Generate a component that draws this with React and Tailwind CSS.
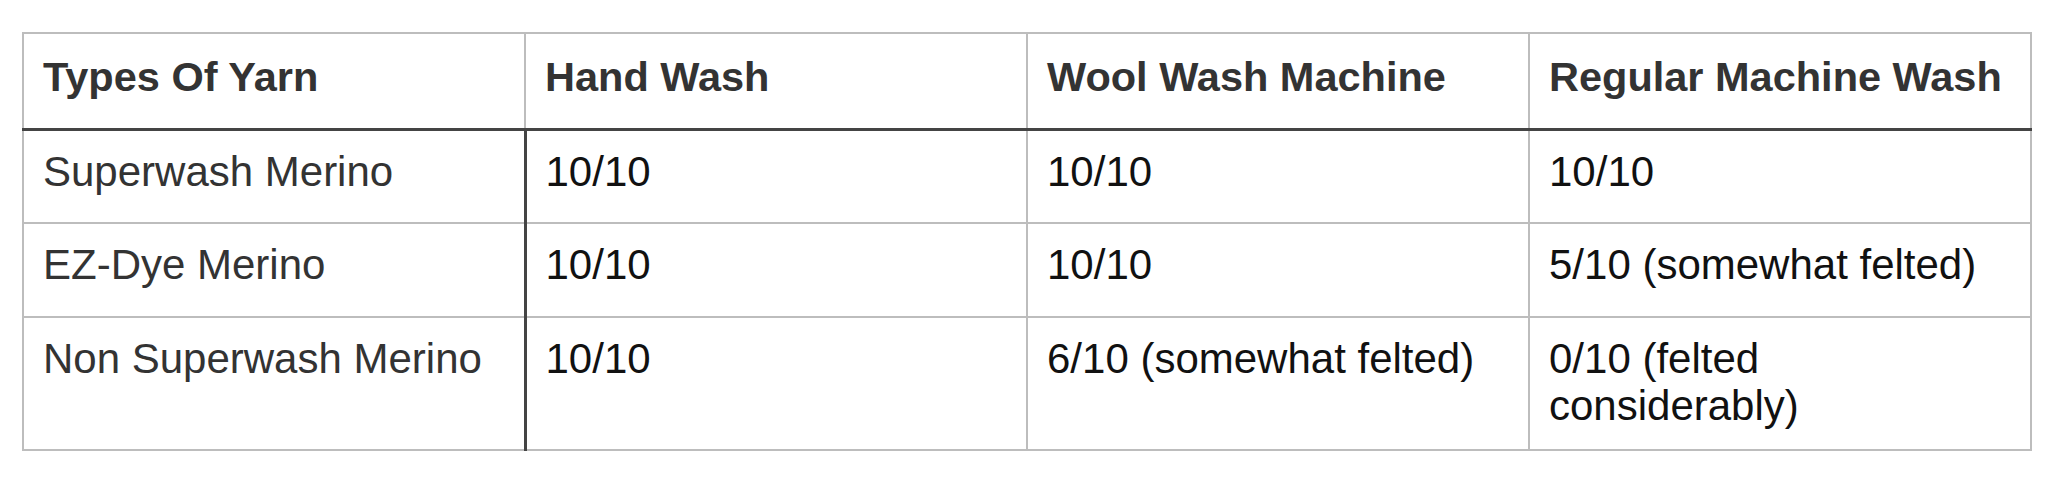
import React from 'react';

const headers = ['Types Of Yarn', 'Hand Wash', 'Wool Wash Machine', 'Regular Machine Wash'];

const rows = [
  { yarn: 'Superwash Merino', values: ['10/10', '10/10', '10/10'] },
  { yarn: 'EZ-Dye Merino', values: ['10/10', '10/10', '5/10 (somewhat felted)'] },
  { yarn: 'Non Superwash Merino', values: ['10/10', '6/10 (somewhat felted)', '0/10 (felted considerably)'] },
];

const App = () => {
  return (
    <div className="bg-white w-[2062px] h-[477px] pt-[32px] pl-[22px]" style={{ fontFamily: '"Liberation Sans", Arial, sans-serif' }}>
      <table className="w-[2010px] table-fixed border-collapse text-[42px] leading-[47px]">
        <thead>
          <tr className="h-[96px]">
            {headers.map((h) => (
              <th
                key={h}
                className="border-2 border-[#bdbdbd] border-b-[3px] border-b-[#444444] px-[19px] pt-[19px] pb-[20px] text-left align-top text-[41.5px] font-bold text-[#333333]"
              >
                {h}
              </th>
            ))}
          </tr>
        </thead>
        <tbody>
          {rows.map((row) => (
            <tr key={row.yarn} className="h-[94px]">
              <td className="border-2 border-[#bdbdbd] border-r-[3px] border-r-[#444444] px-[19px] pt-[17px] pb-[20px] align-top text-[#333333]">
                {row.yarn}
              </td>
              {row.values.map((v, i) => (
                <td key={i} className="border-2 border-[#bdbdbd] pl-[19px] pr-[24px] pt-[17px] pb-[20px] align-top text-[#111111]">
                  {v}
                </td>
              ))}
            </tr>
          ))}
        </tbody>
      </table>
    </div>
  );
};

export default App;
